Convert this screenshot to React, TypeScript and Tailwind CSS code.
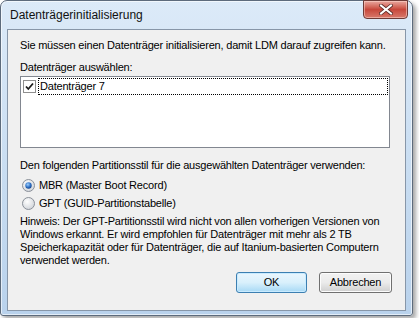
import React from "react";

const font = { fontFamily: '"Liberation Sans", Arial, sans-serif' };

function Radio({ checked }: { checked?: boolean }) {
  return (
    <svg width="13" height="13" viewBox="0 0 13 13" className="shrink-0">
      <defs>
        <radialGradient id={checked ? "rg1" : "rg0"} cx="0.4" cy="0.35" r="0.7">
          <stop offset="0" stopColor="#ffffff" />
          <stop offset="1" stopColor="#cfd3d8" />
        </radialGradient>
        <radialGradient id="dot" cx="0.4" cy="0.35" r="0.7">
          <stop offset="0" stopColor="#9fd0ff" />
          <stop offset="0.6" stopColor="#2d6fc3" />
          <stop offset="1" stopColor="#143f85" />
        </radialGradient>
      </defs>
      <circle cx="6.5" cy="6.5" r="6" fill={`url(#${checked ? "rg1" : "rg0"})`} stroke="#8a9099" />
      {checked && <circle cx="6.5" cy="6.5" r="3.2" fill="url(#dot)" />}
    </svg>
  );
}

function Check() {
  return (
    <svg width="13" height="13" viewBox="0 0 13 13" className="shrink-0">
      <rect x="0.5" y="0.5" width="12" height="12" fill="#fff" stroke="#8f8f8f" />
      <path d="M3 6.5 L5.3 9 L10 3.5" fill="none" stroke="#1a1a1a" strokeWidth="1.8" />
    </svg>
  );
}

export default function App() {
  return (
    <div className="w-[419px] h-[318px] bg-white text-[11px] tracking-[-0.2px] text-black" style={font}>
      <div className="relative w-[413px] h-[316px] rounded-t-[7px] rounded-b-[3px] border border-[#5d6b7c] bg-gradient-to-b from-[#dceaf8] via-[#cadef2] to-[#b9d2ec] shadow-[3px_3px_4px_rgba(0,0,0,0.35),inset_0_0_0_1px_rgba(255,255,255,0.6)] flex flex-col">
        <div className="h-[28px] flex items-start pl-[9px] pt-[7px] text-[12px] tracking-normal leading-[14px] text-[#111]">
          Datenträgerinitialisierung
        </div>
        <div className="absolute top-[-1px] right-[4px] w-[45px] h-[19px] rounded-b-[4px] border border-[#6d3a36] bg-gradient-to-b from-[#e8a79f] via-[#c7473b] to-[#d7786b] shadow-[inset_0_0_0_1px_rgba(255,220,210,0.5)] flex items-center justify-center">
          <svg width="14" height="11" viewBox="0 0 14 11">
            <path d="M2 1.5 L12 9.5 M12 1.5 L2 9.5" stroke="#5a2a26" strokeWidth="3.6" strokeLinecap="square" />
            <path d="M2 1.5 L12 9.5 M12 1.5 L2 9.5" stroke="#ffffff" strokeWidth="2" strokeLinecap="square" />
          </svg>
        </div>
        <div className="mx-[6px] mb-[4px] flex-1 border border-[#8796a8] bg-[#f0f0f0] flex flex-col pl-[12px] pr-[15px] pt-[7px]">
          <div className="leading-[16px] whitespace-nowrap">Sie müssen einen Datenträger initialisieren, damit LDM darauf zugreifen kann.</div>
          <div className="mt-[6px] leading-[16px]">Datenträger auswählen:</div>
          <div className="mt-[1px] h-[72px] border border-[#828790] bg-white p-[1px]">
            <div className="flex items-center h-[17px]">
              <div className="pl-[1px] pr-[2px]"><Check /></div>
              <div className="flex-1 h-[17px] border border-dotted border-black leading-[15px] pl-[1px]">Datenträger 7</div>
            </div>
          </div>
          <div className="mt-[9px] leading-[16px] whitespace-nowrap">Den folgenden Partitionsstil für die ausgewählten Datenträger verwenden:</div>
          <div className="mt-[3px] flex items-center gap-[4px] pl-[2px] h-[18px]">
            <Radio checked />
            <span>MBR (Master Boot Record)</span>
          </div>
          <div className="flex items-center gap-[4px] pl-[2px] h-[18px]">
            <Radio />
            <span>GPT (GUID-Partitionstabelle)</span>
          </div>
          <div className="mt-[3px] leading-[13px] whitespace-nowrap">
            Hinweis: Der GPT-Partitionsstil wird nicht von allen vorherigen Versionen von
            <br />
            Windows erkannt. Er wird empfohlen für Datenträger mit mehr als 2 TB
            <br />
            Speicherkapazität oder für Datenträger, die auf Itanium-basierten Computern
            <br />
            verwendet werden.
          </div>
          <div className="mt-auto mb-[17px] -mr-[2px] flex justify-end gap-[12px]">
            <button className="w-[71px] h-[21px] rounded-[3px] border border-[#3c7fb1] bg-gradient-to-b from-[#eaf6fd] via-[#d9f0fc] to-[#a7d9f5] shadow-[inset_0_0_0_1px_#c9ebff] text-[11px] leading-[19px]">OK</button>
            <button className="w-[73px] h-[21px] rounded-[3px] border border-[#707070] bg-gradient-to-b from-[#f2f2f2] via-[#ebebeb] to-[#cfcfcf] shadow-[inset_0_0_0_1px_#fcfcfc] text-[11px] leading-[19px]">Abbrechen</button>
          </div>
        </div>
      </div>
    </div>
  );
}
